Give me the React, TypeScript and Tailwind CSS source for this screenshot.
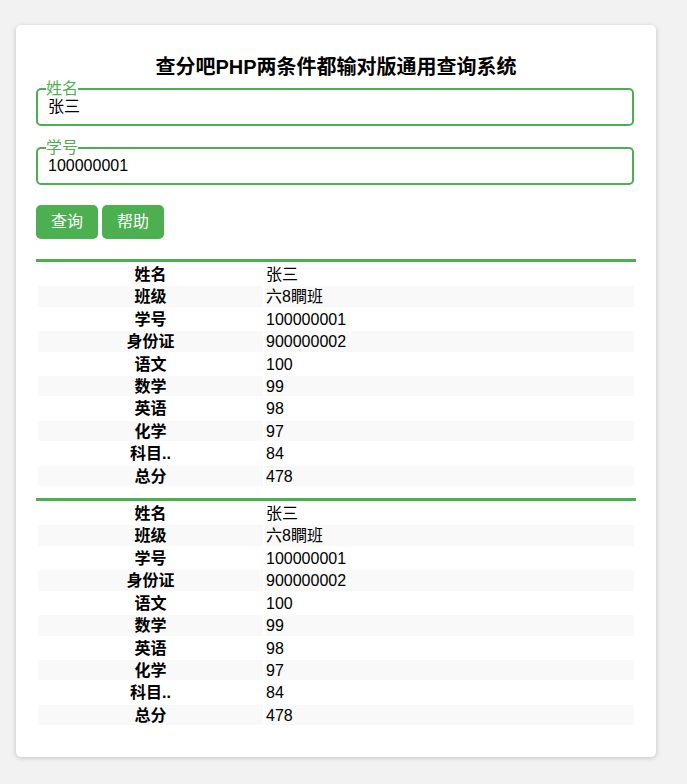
import { useState } from 'react';

const ROWS: [string, string][] = [
  ['姓名', '张三'],
  ['班级', '六8瞷班'],
  ['学号', '100000001'],
  ['身份证', '900000002'],
  ['语文', '100'],
  ['数学', '99'],
  ['英语', '98'],
  ['化学', '97'],
  ['科目..', '84'],
  ['总分', '478'],
];

function Field({ label, value, onChange }: { label: string; value: string; onChange: (v: string) => void }) {
  return (
    <fieldset className="m-0 w-[598px] min-w-0 rounded-[5px] border-2 border-[#4CAF50] px-[8px] pb-[8px] pt-0">
      <legend className="p-0 text-[16px] leading-[18px] text-[#4CAF50]">{label}</legend>
      <input
        value={value}
        onChange={(e) => onChange(e.target.value)}
        className="block h-[18px] w-full border-0 bg-transparent pl-[2px] text-[16px] leading-[18px] text-black outline-none"
      />
    </fieldset>
  );
}

function ScoreTable() {
  return (
    <table className="mb-[10px] w-full border-separate border-spacing-[2px] border-t-[3px] border-[#4CAF50] text-[16px] leading-[18.4px] text-black">
      <tbody>
        {ROWS.map(([k, v], i) => {
          const striped = i % 2 === 1;
          return (
            <tr key={k}>
              <th className={`w-[225px] px-[1px] pb-0 pt-[2px] text-center font-bold ${striped ? 'bg-[#f9f9f9]' : ''}`}>{k}</th>
              <td className={`px-[1px] pb-0 pt-[2px] text-left ${striped ? 'bg-[#f9f9f9]' : ''}`}>{v}</td>
            </tr>
          );
        })}
      </tbody>
    </table>
  );
}

export default function App() {
  const [name, setName] = useState('张三');
  const [sid, setSid] = useState('100000001');

  return (
    <div
      className="min-h-[784px] bg-[#f2f2f2] pt-[25px]"
      style={{ fontFamily: '"Liberation Sans", "Noto Sans CJK SC", sans-serif' }}
    >
      <div className="ml-[16px] w-[640px] rounded-[5px] bg-white p-[20px] shadow-[0_1px_5px_rgba(0,0,0,0.2)]">
        <h2 className="mb-[1px] mt-[11px] text-center text-[20px] font-bold leading-[23px] text-black">
          查分吧PHP两条件都输对版通用查询系统
        </h2>
        <div className="flex flex-col gap-[13px]">
          <Field label="姓名" value={name} onChange={setName} />
          <Field label="学号" value={sid} onChange={setSid} />
        </div>
        <div className="mb-[20px] mt-[20px] flex gap-[4px]">
          <button type="button" className="h-[34px] rounded-[5px] bg-[#4CAF50] px-[15px] text-[16px] leading-[18px] text-white">
            查询
          </button>
          <button type="button" className="h-[34px] rounded-[5px] bg-[#4CAF50] px-[15px] text-[16px] leading-[18px] text-white">
            帮助
          </button>
        </div>
        <ScoreTable />
        <ScoreTable />
      </div>
    </div>
  );
}
